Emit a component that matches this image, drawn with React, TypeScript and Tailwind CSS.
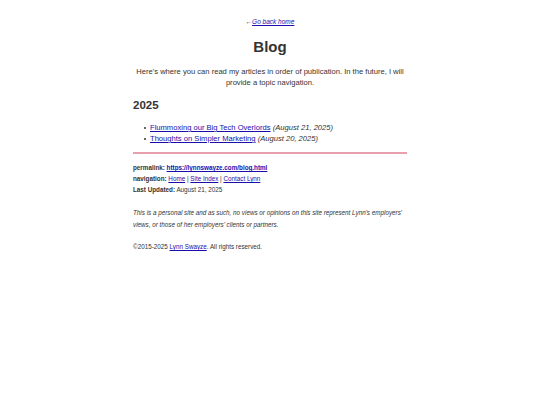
export default function App() {
  return (
    <div className="min-h-[405px] bg-white font-['Liberation_Sans',Arial,sans-serif] text-[#333]">
      <div className="mx-auto w-[274px] pt-[18px]">
        <p className="text-center text-[6.5px] leading-[8px]">
          ←<a href="#" className="italic text-[#1a0dab] underline">Go back home</a>
        </p>
        <h1 className="mt-[11px] text-center text-[15px] font-bold leading-[20px]">Blog</h1>
        <p className="mt-[9px] text-center text-[7.6px] leading-[11px]">
          Here's where you can read my articles in order of publication. In the future, I will provide a topic navigation.
        </p>
        <h2 className="mt-[10px] text-[11.5px] font-bold leading-[15px]">2025</h2>
        <ul className="mt-[9px] pl-[11px] text-[7.6px] leading-[11px]">
          {[
            ["Flummoxing our Big Tech Overlords", "(August 21, 2025)"],
            ["Thoughts on Simpler Marketing", "(August 20, 2025)"],
          ].map(([title, date]) => (
            <li key={title} className="flex items-center">
              <span className="mr-[4px] h-[2px] w-[2px] rounded-full bg-[#333]" />
              <span>
                <a href="#" className="text-[#1a0dab] underline">{title}</a> <em>{date}</em>
              </span>
            </li>
          ))}
        </ul>
        <hr className="mt-[8px] border-0 border-t-[2px] border-[#e8a0ae]" />
        <div className="mt-[8px] text-[6.3px] leading-[11px]">
          <p>
            <b>permalink:</b>{" "}
            <a href="#" className="font-bold text-[#1a0dab] underline">https://lynnswayze.com/blog.html</a>
          </p>
          <p>
            <b>navigation:</b> <a href="#" className="text-[#1a0dab] underline">Home</a> |{" "}
            <a href="#" className="text-[#1a0dab] underline">Site Index</a> |{" "}
            <a href="#" className="text-[#1a0dab] underline">Contact Lynn</a>
          </p>
          <p>
            <b>Last Updated:</b> August 21, 2025
          </p>
          <p className="mt-[12px] italic leading-[12px]">
            This is a personal site and as such, no views or opinions on this site represent Lynn's employers' views, or those of her employers' clients or partners.
          </p>
          <p className="mt-[10px]">
            ©2015-2025 <a href="#" className="text-[#1a0dab] underline">Lynn Swayze</a>. All rights reserved.
          </p>
        </div>
      </div>
    </div>
  );
}
